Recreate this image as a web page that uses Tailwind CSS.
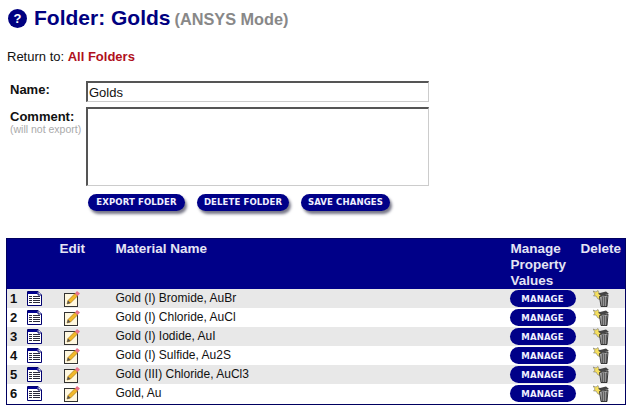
<!DOCTYPE html>
<html><head><meta charset="utf-8"><script src="https://cdn.jsdelivr.net/npm/@tailwindcss/browser@4"></script></head>
<body class="bg-white font-['Liberation_Sans',Arial,sans-serif] w-[637px] h-[417px] overflow-hidden text-[13px] text-[#111]">
<svg width="0" height="0" class="absolute">
<defs>
<symbol id="doc" viewBox="0 0 15 15"><path d="M.5 .5H11L14.5 4V14.5H.5Z" fill="#fff" stroke="#000070"/><path d="M1 1H10.5V3H1Z" fill="#000090"/><path d="M11 .5V4H14.5" fill="#dfe3f4" stroke="#000070"/><path d="M2 5.5H13M2 7.5H13M2 9.5H13M2 11.5H13" stroke="#2a2a3a"/><path d="M5.5 5V13" stroke="#fff"/></symbol>
<symbol id="edit" viewBox="0 0 16 17"><rect x=".5" y="3.5" width="13" height="13" fill="#fff8e0" stroke="#333"/><path d="M3 14L4 10.5L11 3.5L13.5 6L6.5 13Z" fill="#f2b828" stroke="#9a6a10" stroke-width=".6"/><path d="M11 3.5L13 1L16 3.5L13.5 6Z" fill="#ea7088"/><path d="M3 14L4 10.5L6.5 13Z" fill="#555"/></symbol>
<symbol id="trash" viewBox="0 0 16 17"><path d="M0 1L3 2L5 .5L6 3L8 4.5L8 9.5L5 9L3 6L.5 6L2 4Z" fill="#f6e060" stroke="#666" stroke-width=".5"/><path d="M5 3.5L13 1.5L16 4L8 6Z" fill="#444"/><path d="M6.5 6.5L15 5L14 16.5H8Z" fill="#c0c0c0" stroke="#111" stroke-width=".8"/><path d="M9.2 7V16M11.2 6.5V16M13.2 6.5V16" stroke="#222" stroke-width=".9"/></symbol>
</defs>
</svg>
<div class="flex items-center pl-[8px] pt-[6px] h-[34px]">
  <span class="flex items-center justify-center w-[19px] h-[19px] rounded-full bg-[#000080] text-white text-[13px] font-bold leading-none mb-[4px] mr-[7px]">?</span>
  <h1 class="text-[21px] leading-[26px] font-bold text-[#000080] mb-[4px]">Folder: Golds</h1>
  <span class="text-[16.3px] font-bold text-[#888] ml-[4px] mb-[2px]">(ANSYS Mode)</span>
</div>
<p class="pl-[7px] mt-[15px] leading-[15px]">Return to: <a class="font-bold text-[#b01020]">All Folders</a></p>
<div class="flex pl-[10px] mt-[17px]">
  <div class="w-[76px] shrink-0">
    <div class="font-bold text-[13px] leading-[15px] mt-[1px]">Name:</div>
    <div class="font-bold text-[13px] leading-[15px] mt-[12px]">Comment:</div>
    <div class="text-[10.5px] leading-[11px] text-[#aaa] whitespace-nowrap">(will not export)</div>
  </div>
  <div>
    <input value="Golds" class="block w-[343px] h-[21px] border-2 border-solid border-t-[#555] border-l-[#555] border-r-[#ccc] border-b-[#ccc] border-r-[1px] border-b-[1px] px-[1px] text-[13px] bg-white outline-none">
    <textarea class="block w-[343px] h-[79px] mt-[5px] border-2 border-solid border-t-[#555] border-l-[#555] border-r-[#ccc] border-b-[#ccc] border-r-[1px] border-b-[1px] bg-white resize-none outline-none"></textarea>
    <div class="flex mt-[8px] pl-[2px] text-[#f0f0ff] font-['DejaVu_Sans_Condensed','DejaVu_Sans',sans-serif] font-bold text-[9.5px] tracking-[0.1px] whitespace-nowrap">
      <span class="flex items-center justify-center w-[97px] h-[17px] rounded-full bg-[#000088] shadow-[2px_3px_3px_#778]">EXPORT FOLDER</span>
      <span class="flex items-center justify-center w-[92px] h-[17px] rounded-full bg-[#000088] shadow-[2px_3px_3px_#778] ml-[12px]">DELETE FOLDER</span>
      <span class="flex items-center justify-center w-[89px] h-[17px] rounded-full bg-[#000088] shadow-[2px_3px_3px_#778] ml-[12px]">SAVE CHANGES</span>
    </div>
  </div>
</div>
<table class="ml-[6px] mt-[27px] w-[620px] table-fixed border-collapse border border-[#000060] text-[12px]">
  <colgroup><col class="w-[18px]"><col class="w-[35px]"><col class="w-[56px]"><col class="w-[395px]"><col class="w-[70px]"><col></colgroup>
  <thead><tr class="bg-[#000088] text-[#e4e4f4] text-[13.5px] font-bold text-left align-top h-[50px] leading-[16px]">
    <th></th><th></th><th class="pt-[2px]">Edit</th><th class="pt-[2px]">Material Name</th><th class="pt-[2px]">Manage Property Values</th><th class="pt-[2px]">Delete</th>
  </tr></thead>
  <tbody class="leading-[17px]">
  <tr class="h-[19px] bg-[#e8e8e8]"><td class="font-bold text-[13px] pl-[3px]">1</td><td><svg class="w-[15px] h-[15px] block ml-[2px]"><use href="#doc"/></svg></td><td><svg class="w-[16px] h-[17px] block ml-[4px]"><use href="#edit"/></svg></td><td>Gold (I) Bromide, AuBr</td><td><span class="flex items-center justify-center w-[66px] h-[17px] -ml-[1px] rounded-full bg-[#000088] text-[#f0f0ff] font-['DejaVu_Sans_Condensed','DejaVu_Sans',sans-serif] font-bold text-[9.5px] tracking-[0.1px]">MANAGE</span></td><td><svg class="w-[16px] h-[17px] block ml-[12px]"><use href="#trash"/></svg></td></tr>
  <tr class="h-[19px]"><td class="font-bold text-[13px] pl-[3px]">2</td><td><svg class="w-[15px] h-[15px] block ml-[2px]"><use href="#doc"/></svg></td><td><svg class="w-[16px] h-[17px] block ml-[4px]"><use href="#edit"/></svg></td><td>Gold (I) Chloride, AuCl</td><td><span class="flex items-center justify-center w-[66px] h-[17px] -ml-[1px] rounded-full bg-[#000088] text-[#f0f0ff] font-['DejaVu_Sans_Condensed','DejaVu_Sans',sans-serif] font-bold text-[9.5px] tracking-[0.1px]">MANAGE</span></td><td><svg class="w-[16px] h-[17px] block ml-[12px]"><use href="#trash"/></svg></td></tr>
  <tr class="h-[19px] bg-[#e8e8e8]"><td class="font-bold text-[13px] pl-[3px]">3</td><td><svg class="w-[15px] h-[15px] block ml-[2px]"><use href="#doc"/></svg></td><td><svg class="w-[16px] h-[17px] block ml-[4px]"><use href="#edit"/></svg></td><td>Gold (I) Iodide, AuI</td><td><span class="flex items-center justify-center w-[66px] h-[17px] -ml-[1px] rounded-full bg-[#000088] text-[#f0f0ff] font-['DejaVu_Sans_Condensed','DejaVu_Sans',sans-serif] font-bold text-[9.5px] tracking-[0.1px]">MANAGE</span></td><td><svg class="w-[16px] h-[17px] block ml-[12px]"><use href="#trash"/></svg></td></tr>
  <tr class="h-[19px]"><td class="font-bold text-[13px] pl-[3px]">4</td><td><svg class="w-[15px] h-[15px] block ml-[2px]"><use href="#doc"/></svg></td><td><svg class="w-[16px] h-[17px] block ml-[4px]"><use href="#edit"/></svg></td><td>Gold (I) Sulfide, Au2S</td><td><span class="flex items-center justify-center w-[66px] h-[17px] -ml-[1px] rounded-full bg-[#000088] text-[#f0f0ff] font-['DejaVu_Sans_Condensed','DejaVu_Sans',sans-serif] font-bold text-[9.5px] tracking-[0.1px]">MANAGE</span></td><td><svg class="w-[16px] h-[17px] block ml-[12px]"><use href="#trash"/></svg></td></tr>
  <tr class="h-[19px] bg-[#e8e8e8]"><td class="font-bold text-[13px] pl-[3px]">5</td><td><svg class="w-[15px] h-[15px] block ml-[2px]"><use href="#doc"/></svg></td><td><svg class="w-[16px] h-[17px] block ml-[4px]"><use href="#edit"/></svg></td><td>Gold (III) Chloride, AuCl3</td><td><span class="flex items-center justify-center w-[66px] h-[17px] -ml-[1px] rounded-full bg-[#000088] text-[#f0f0ff] font-['DejaVu_Sans_Condensed','DejaVu_Sans',sans-serif] font-bold text-[9.5px] tracking-[0.1px]">MANAGE</span></td><td><svg class="w-[16px] h-[17px] block ml-[12px]"><use href="#trash"/></svg></td></tr>
  <tr class="h-[20px]"><td class="font-bold text-[13px] pl-[3px]">6</td><td><svg class="w-[15px] h-[15px] block ml-[2px]"><use href="#doc"/></svg></td><td><svg class="w-[16px] h-[17px] block ml-[4px]"><use href="#edit"/></svg></td><td>Gold, Au</td><td><span class="flex items-center justify-center w-[66px] h-[17px] -ml-[1px] rounded-full bg-[#000088] text-[#f0f0ff] font-['DejaVu_Sans_Condensed','DejaVu_Sans',sans-serif] font-bold text-[9.5px] tracking-[0.1px]">MANAGE</span></td><td><svg class="w-[16px] h-[17px] block ml-[12px]"><use href="#trash"/></svg></td></tr>
  </tbody>
</table>
</body></html>
